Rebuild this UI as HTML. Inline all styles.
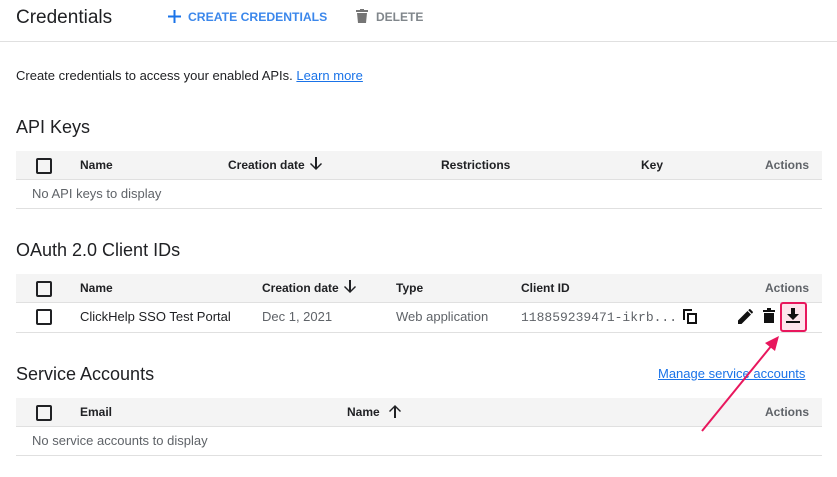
<!DOCTYPE html>
<html><head><style>
body{margin:0;width:837px;height:477px;background:#fff;font-family:"Liberation Sans",Arial,sans-serif;position:relative;overflow:hidden;color:#202124}
.a{position:absolute;white-space:nowrap}
.hd{position:absolute;left:16px;width:806px;height:28px;background:#f4f4f4;border-bottom:1px solid #e0e0e0}
.ln{position:absolute;left:16px;width:806px;height:1px;background:#e0e0e0}
.th{font-size:12px;font-weight:bold;color:#202124}
.cb{position:absolute;left:36px;width:12px;height:12px;border:2px solid #202124;border-radius:2px}
.td{font-size:13px;color:#5f6368}
h2{position:absolute;margin:0;font-weight:normal;font-size:18px;color:#202124;white-space:nowrap}
</style></head><body>
<div class="a" style="left:16px;top:7px;font-size:19px">Credentials</div>
<svg class="a" style="left:168px;top:10px" width="13" height="13"><path d="M5.5 0h2v5.5H13v2H7.5V13h-2V7.5H0v-2h5.5z" fill="#1a73e8"/></svg>
<div class="a" style="left:188px;top:10px;font-size:12.2px;color:#1a73e8;font-weight:bold;opacity:.85">CREATE CREDENTIALS</div>
<svg class="a" style="left:356px;top:9px" width="12" height="14"><path d="M0 1h12v2H0zM4 0h4v1H4zM1 4h10l-1 10H2z" fill="#757575"/></svg>
<div class="a" style="left:376px;top:10px;font-size:12px;color:#80868b;font-weight:bold">DELETE</div>
<div class="ln" style="left:0;width:837px;top:41px"></div>
<div class="a" style="left:16px;top:68px;font-size:13px">Create credentials to access your enabled APIs. <span style="color:#1a73e8;text-decoration:underline">Learn more</span></div>

<h2 style="left:16px;top:117px">API Keys</h2>
<div class="hd" style="top:151px"></div>
<div class="cb" style="top:158px"></div>
<div class="a th" style="left:80px;top:158px">Name</div>
<div class="a th" style="left:228px;top:158px">Creation date</div>
<svg class="a" style="left:310px;top:157px" width="12" height="14"><path d="M5 0h2v10l4-4 1 1-6 6-6-6 1-1 4 4z" fill="#202124"/></svg>
<div class="a th" style="left:441px;top:158px">Restrictions</div>
<div class="a th" style="left:641px;top:158px">Key</div>
<div class="a th" style="left:765px;top:158px;color:#5f6368">Actions</div>
<div class="a td" style="left:32px;top:186px">No API keys to display</div>
<div class="ln" style="top:208px"></div>

<h2 style="left:16px;top:240px">OAuth 2.0 Client IDs</h2>
<div class="hd" style="top:274px"></div>
<div class="cb" style="top:281px"></div>
<div class="a th" style="left:80px;top:281px">Name</div>
<div class="a th" style="left:262px;top:281px">Creation date</div>
<svg class="a" style="left:344px;top:280px" width="12" height="14"><path d="M5 0h2v10l4-4 1 1-6 6-6-6 1-1 4 4z" fill="#202124"/></svg>
<div class="a th" style="left:396px;top:281px">Type</div>
<div class="a th" style="left:521px;top:281px">Client ID</div>
<div class="a th" style="left:765px;top:281px;color:#5f6368">Actions</div>
<div class="cb" style="top:309px"></div>
<div class="a" style="left:80px;top:309px;font-size:13px">ClickHelp SSO Test Portal</div>
<div class="a td" style="left:262px;top:309px">Dec 1, 2021</div>
<div class="a td" style="left:396px;top:309px">Web application</div>
<div class="a" style="left:521px;top:310px;font-family:'Liberation Mono',monospace;font-size:13px;color:#5f6368">118859239471-ikrb...</div>
<svg class="a" style="left:683px;top:309px" width="14" height="15"><path d="M0 0h9v2H2v9H0zM4 4h10v11H4zM6 6v7h6V6z" fill="#111"/></svg>
<svg class="a" style="left:738px;top:309px" width="15" height="15"><path d="M0 11.5V15h3.5L13 5.5 9.5 2zM14.6 3.9a1 1 0 000-1.4L12.5.4a1 1 0 00-1.4 0L10.3 1.2l3.5 3.5z" fill="#111"/></svg>
<svg class="a" style="left:763px;top:308px" width="12" height="16"><path d="M0 2h12v2H0zM4 0h4v2H4zM1 5h10v10H1z" fill="#111"/></svg>
<div class="a" style="left:780px;top:302px;width:23px;height:26px;border:2px solid #e8175d;border-radius:3px;background:#fde4ec"></div>
<svg class="a" style="left:786px;top:308px" width="14" height="16"><path d="M5 0h4v6h4l-6 6-6-6h4zM0 13h14v2H0z" fill="#111"/></svg>
<div class="ln" style="top:332px"></div>

<h2 style="left:16px;top:364px">Service Accounts</h2>
<div class="a" style="left:658px;top:366px;font-size:13px;color:#1a73e8;text-decoration:underline">Manage service accounts</div>
<div class="hd" style="top:398px"></div>
<div class="cb" style="top:405px"></div>
<div class="a th" style="left:80px;top:405px">Email</div>
<div class="a th" style="left:347px;top:405px">Name</div>
<svg class="a" style="left:389px;top:404px" width="12" height="14"><path d="M5 14h2V4l4 4 1-1-6-6-6 6 1 1 4-4z" fill="#202124"/></svg>
<div class="a th" style="left:765px;top:405px;color:#5f6368">Actions</div>
<div class="a td" style="left:32px;top:433px">No service accounts to display</div>
<div class="ln" style="top:455px"></div>

<svg class="a" style="left:0;top:0" width="837" height="477"><line x1="702" y1="431" x2="772" y2="345" stroke="#e8175d" stroke-width="2"/><path d="M779 336 L765 343 L775 351 Z" fill="#e8175d"/></svg>
</body></html>
